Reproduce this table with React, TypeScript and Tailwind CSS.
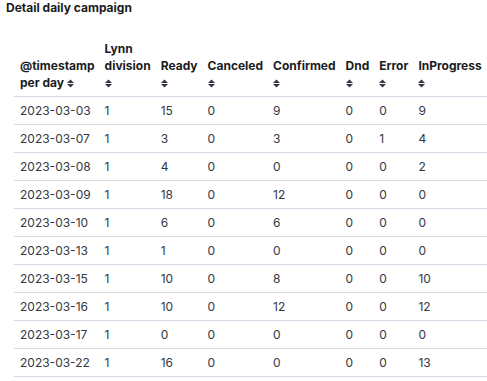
import React from "react";

const rows: (string | number)[][] = [
  ["2023-03-03", 1, 15, 0, 9, 0, 0, 9],
  ["2023-03-07", 1, 3, 0, 3, 0, 1, 4],
  ["2023-03-08", 1, 4, 0, 0, 0, 0, 2],
  ["2023-03-09", 1, 18, 0, 12, 0, 0, 0],
  ["2023-03-10", 1, 6, 0, 6, 0, 0, 0],
  ["2023-03-13", 1, 1, 0, 0, 0, 0, 0],
  ["2023-03-15", 1, 10, 0, 8, 0, 0, 10],
  ["2023-03-16", 1, 10, 0, 12, 0, 0, 12],
  ["2023-03-17", 1, 0, 0, 0, 0, 0, 0],
  ["2023-03-22", 1, 16, 0, 0, 0, 0, 13],
];

function SortIcon() {
  return (
    <svg width="7" height="9" viewBox="0 0 7 9" className="inline-block align-[-1px]">
      <path d="M0 4 L3.5 0.5 L7 4 Z" fill="#343741" />
      <path d="M0 5 L3.5 8.5 L7 5 Z" fill="#343741" />
    </svg>
  );
}

const headers: React.ReactNode[] = [
  <>
    @timestamp
    <br />
    per day <SortIcon />
  </>,
  <>
    Lynn
    <br />
    division
    <br />
    <SortIcon />
  </>,
  <>
    Ready
    <br />
    <SortIcon />
  </>,
  <>
    Canceled
    <br />
    <SortIcon />
  </>,
  <>
    Confirmed
    <br />
    <SortIcon />
  </>,
  <>
    Dnd
    <br />
    <SortIcon />
  </>,
  <>
    Error
    <br />
    <SortIcon />
  </>,
  <>
    InProgress
    <br />
    <SortIcon />
  </>,
];

export default function App() {
  return (
    <div
      className="w-[487px] h-[381px] overflow-hidden bg-white"
      style={{ fontFamily: "Inter, 'Noto Sans', sans-serif" }}
    >
      <div className="px-[6px] text-[12px] leading-[16px] font-bold text-[#1a1c21]">
        Detail daily campaign
      </div>
      <div className="ml-[14px] mt-[19px]">
        <table className="w-full border-collapse">
          <thead>
            <tr className="border-b border-[#d3dae6]">
              {headers.map((h, i) => (
                <th
                  key={i}
                  className="w-px whitespace-nowrap text-left align-bottom pl-[6px] pr-[4px] pt-[5px] pb-[5px] text-[12px] leading-[17px] font-bold text-[#1a1c21]"
                >
                  {h}
                </th>
              ))}
              <th className="w-full" />
            </tr>
          </thead>
          <tbody>
            {rows.map((r, ri) => (
              <tr key={ri} className="border-b border-[#d3dae6]">
                {r.map((c, ci) => (
                  <td
                    key={ci}
                    className="w-px whitespace-nowrap pl-[6px] pr-[4px] py-[5px] text-[12px] leading-[17px] text-[#343741]"
                  >
                    {c}
                  </td>
                ))}
                <td className="w-full" />
              </tr>
            ))}
          </tbody>
        </table>
      </div>
    </div>
  );
}
